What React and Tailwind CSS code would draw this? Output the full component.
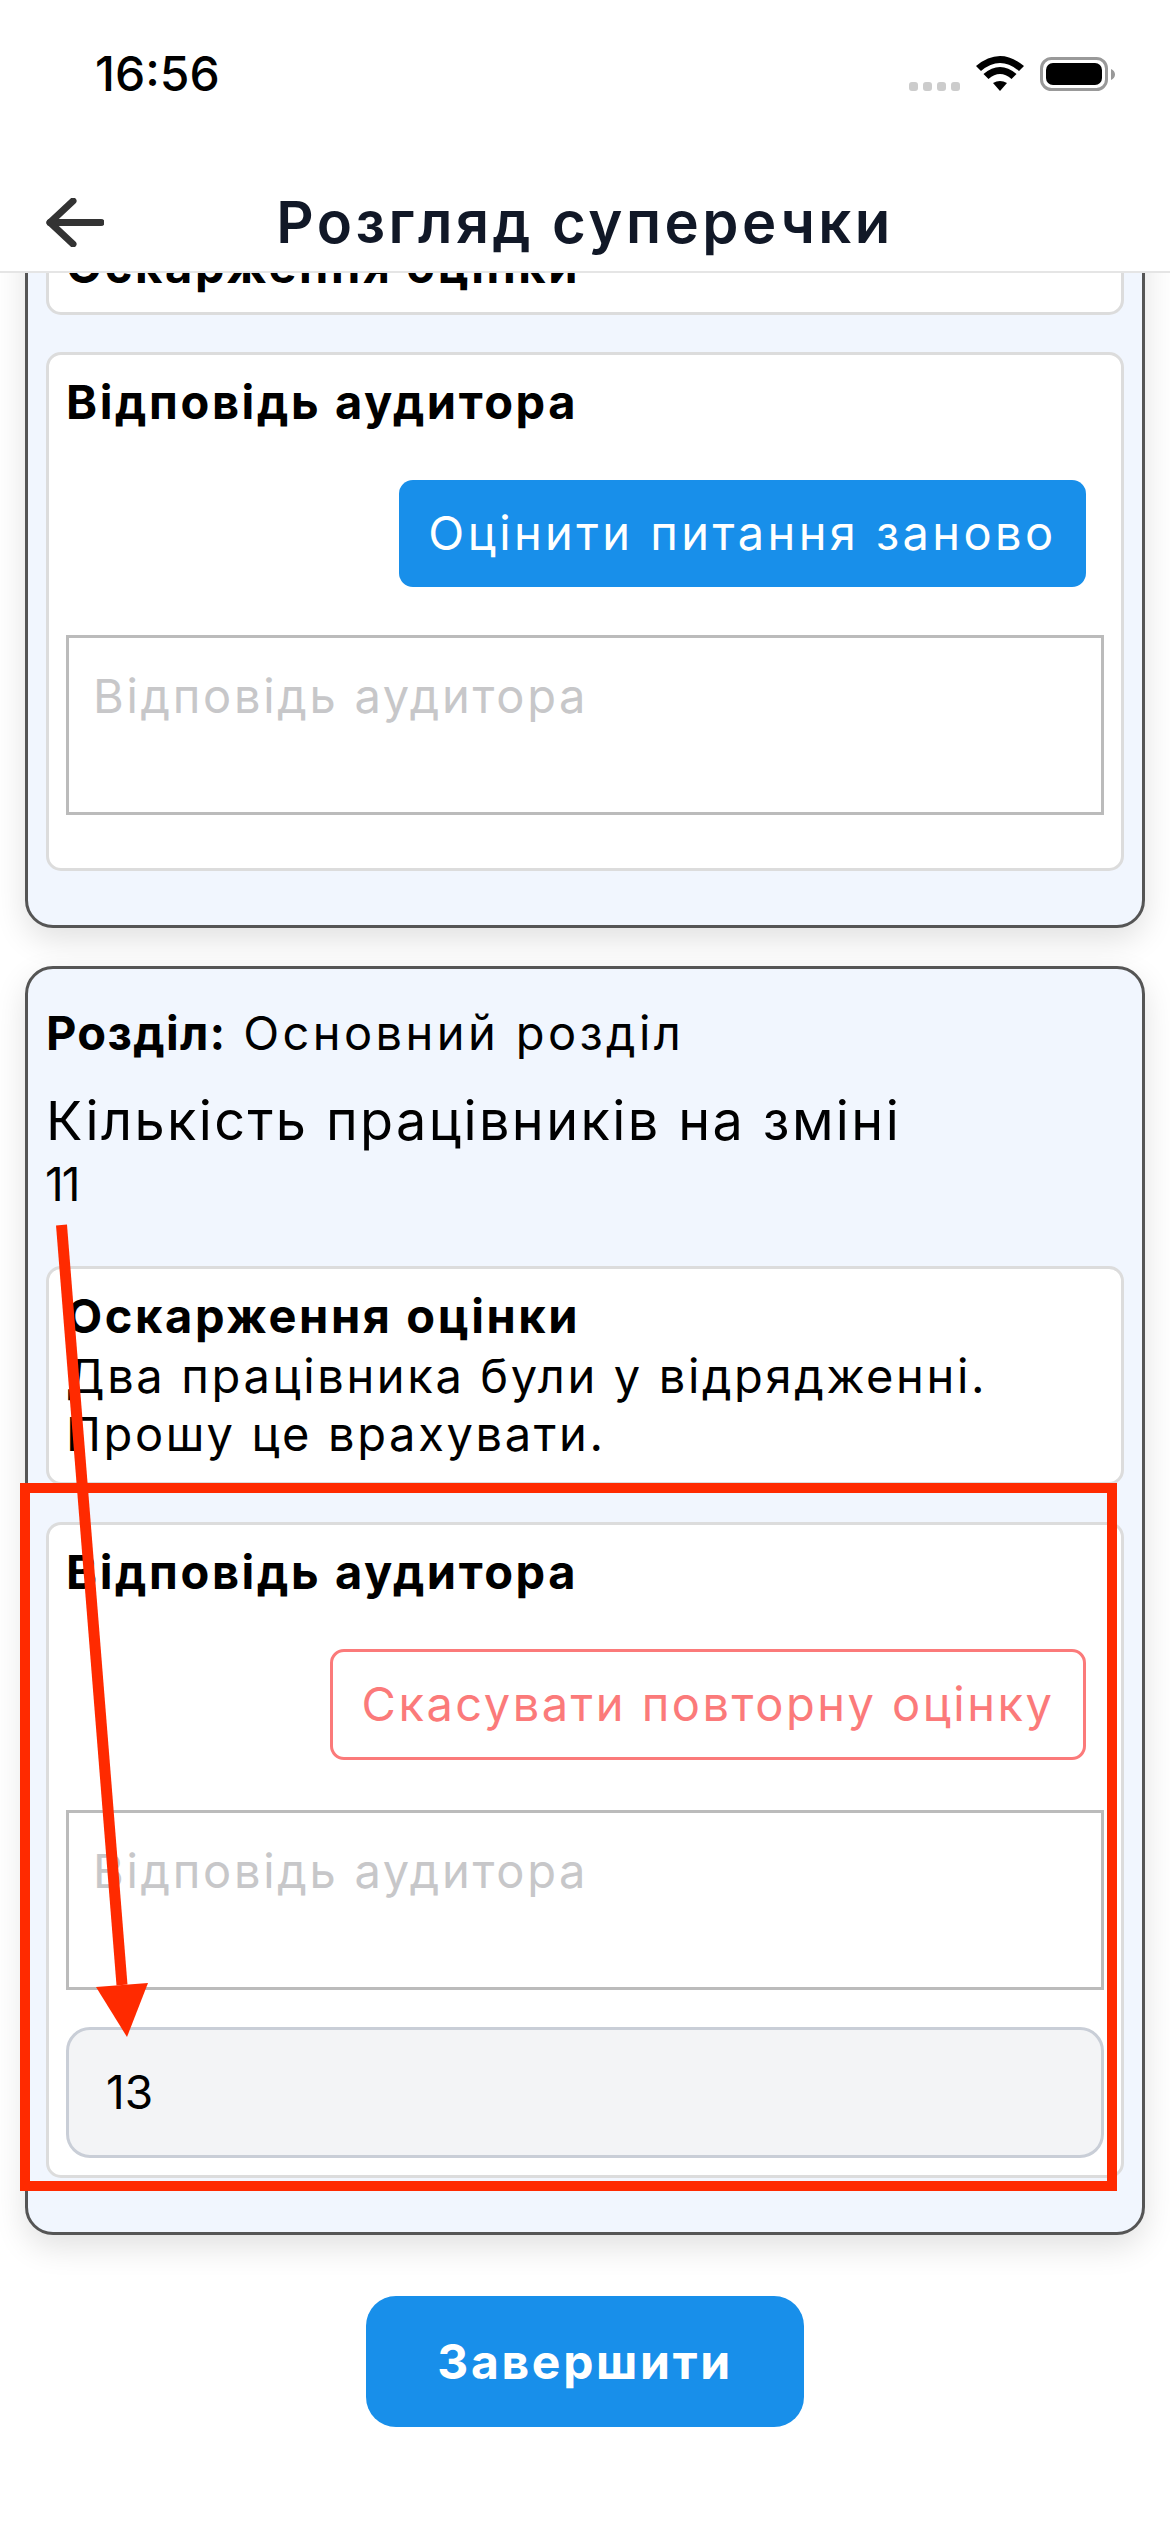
const FONT = 'font-["Inter","Noto_Sans",sans-serif]';

function Wifi() {
  return (
    <svg width="48" height="35" viewBox="0 0 48 35" fill="#000">
      <path d="M0 10Q24 -10 48 10L43 15Q24 -1 5 15Z" />
      <path d="M7.5 18Q24 4 40.5 18L35.5 23Q24 13 12.5 23Z" />
      <path d="M17 27Q24 23 31 27L24 35Z" />
    </svg>
  );
}

function Battery() {
  return (
    <svg width="75" height="34" viewBox="0 0 75 34">
      <rect x="1.5" y="1.5" width="65" height="31" rx="10" fill="none" stroke="#999" strokeWidth="3" />
      <rect x="6" y="6" width="56" height="22" rx="7" fill="#000" />
      <path d="M71 12C73.500 13 75 15 75 17.500C75 20 73.500 22 71 23Z" fill="#999" />
    </svg>
  );
}

function BackArrow() {
  return (
    <svg width="58" height="49" viewBox="0 0 58 49" fill="none" stroke="#333" strokeWidth="7" strokeLinecap="round" strokeLinejoin="round">
      <path d="M55 24.500H4" />
      <path d="M27 3L4 24.500L27 46" />
    </svg>
  );
}

function StatusBar() {
  return (
    <div className="flex justify-between pl-[95px] pr-[55px] pt-[50px]">
      <span className="text-[48px] leading-[48px] font-medium text-black">16:56</span>
      <div className="mt-[5px] flex h-[37px] items-center gap-[16px]">
        <div className="flex items-end gap-[5px] self-end pb-px">
          <i className="h-[9px] w-[9px] rounded-[3px] bg-[#cccccc]" />
          <i className="h-[9px] w-[9px] rounded-[3px] bg-[#cccccc]" />
          <i className="h-[9px] w-[9px] rounded-[3px] bg-[#cccccc]" />
          <i className="h-[9px] w-[9px] rounded-[3px] bg-[#cccccc]" />
        </div>
        <Wifi />
        <Battery />
      </div>
    </div>
  );
}

function Header() {
  return (
    <header className="relative z-10 h-[273px] border-b-2 border-[#e5e5e5] bg-white">
      <StatusBar />
      <div className="mt-[89px] grid h-[70px] grid-cols-[1fr_auto_1fr] items-center px-[46px]">
        <BackArrow />
        <h1 className="text-[58px] leading-[70px] font-semibold tracking-[3.5px] text-[#111827]">Розгляд суперечки</h1>
      </div>
    </header>
  );
}

function Panel({ children, className = '' }) {
  return (
    <section className={`mx-[25px] rounded-[28px] border-[3px] border-[#555555] bg-[#f1f6fe] px-[18px] pb-[54px] shadow-[0_12px_32px_rgba(0,0,0,0.12)] ${className}`}>
      {children}
    </section>
  );
}

function AppealCard({ text, className = '' }) {
  return (
    <div className={`rounded-[15px] border-[3px] border-[#dcdcdc] bg-white px-[17px] pt-[19px] pb-[18px] ${className}`}>
      <h3 className="text-[47px] leading-[56px] font-bold tracking-[2.6px] text-black">Оскарження оцінки</h3>
      {text && (
        <p className="mt-[3px] pb-px text-[47px] leading-[58px] tracking-[2.65px] text-black">
          {text[0]}<br />{text[1]}
        </p>
      )}
    </div>
  );
}

function ReplyCard({ cancelled }) {
  return (
    <div className={`mt-[37px] rounded-[15px] border-[3px] border-[#dcdcdc] bg-white px-[17px] pt-[19px] ${cancelled ? 'pb-[17px]' : 'pb-[53px]'}`}>
      <h3 className="text-[47px] leading-[56px] font-bold tracking-[2.6px] text-black">Відповідь аудитора</h3>
      <div className="mt-[49px] flex justify-end pr-[18px]">
        {cancelled ? (
          <button className="flex h-[111px] w-[756px] items-center justify-center rounded-[14px] border-[3px] border-[#fb7a7a] text-[47px] tracking-[2.5px] text-[#fb7a7a]">
            Скасувати повторну оцінку
          </button>
        ) : (
          <button className="mt-px flex h-[107px] w-[687px] items-center justify-center rounded-[14px] bg-[#188fea] text-[47px] tracking-[3.4px] text-white">
            Оцінити питання заново
          </button>
        )}
      </div>
      <div className={`${cancelled ? 'mt-[50px]' : 'mt-[48px]'} h-[180px] border-[3px] border-[#bbbbbb] bg-white px-[24px] pt-[30px] text-[47px] leading-[56px] tracking-[2.7px] text-[#c7c7c9]`}>
        Відповідь аудитора
      </div>
      {cancelled && (
        <div className="mt-[37px] flex h-[131px] items-center rounded-[24px] border-[3px] border-[#c9ced7] bg-[#f3f4f6] pl-[37px] text-[46px] text-black">
          13
        </div>
      )}
    </div>
  );
}

function Annotation() {
  return (
    <svg className="pointer-events-none absolute top-0 left-0 z-20" width="1170" height="2532" viewBox="0 0 1170 2532">
      <rect x="25" y="1488" width="1087" height="698" fill="none" stroke="#ff2a00" strokeWidth="10" />
      <path d="M61.500 1225L122 1985" stroke="#ff2a00" strokeWidth="11" />
      <path d="M96 1987L148 1983L127 2037Z" fill="#ff2a00" />
    </svg>
  );
}

export default function App() {
  return (
    <div className={`relative h-[2532px] w-[1170px] overflow-hidden bg-white ${FONT}`}>
      <Header />
      <main>
        <Panel className="-mt-[78px] pt-[18px]">
          <AppealCard />
          <ReplyCard />
        </Panel>

        <Panel className="mt-[38px] pt-[18px]">
          <p className="mt-[18px] text-[47px] leading-[56px] tracking-[3.4px] text-black">
            <b className="font-bold tracking-[1.3px]">Розділ:</b> Основний розділ
          </p>
          <p className="mt-[28px] text-[54px] leading-[64px] tracking-[2.4px] text-black">Кількість працівників на зміні</p>
          <p className="mt-[3px] -ml-px text-[46px] leading-[56px] tracking-[-2px] text-black">11</p>
          <AppealCard className="mt-[54px]" text={['Два працівника були у відрядженні.', 'Прошу це врахувати.']} />
          <ReplyCard cancelled />
        </Panel>

        <div className="mt-[61px] flex justify-center">
          <button className="h-[131px] w-[438px] rounded-[30px] bg-[#188fea] text-[48px] font-bold tracking-[2.7px] text-white">
            Завершити
          </button>
        </div>
      </main>
      <Annotation />
    </div>
  );
}
